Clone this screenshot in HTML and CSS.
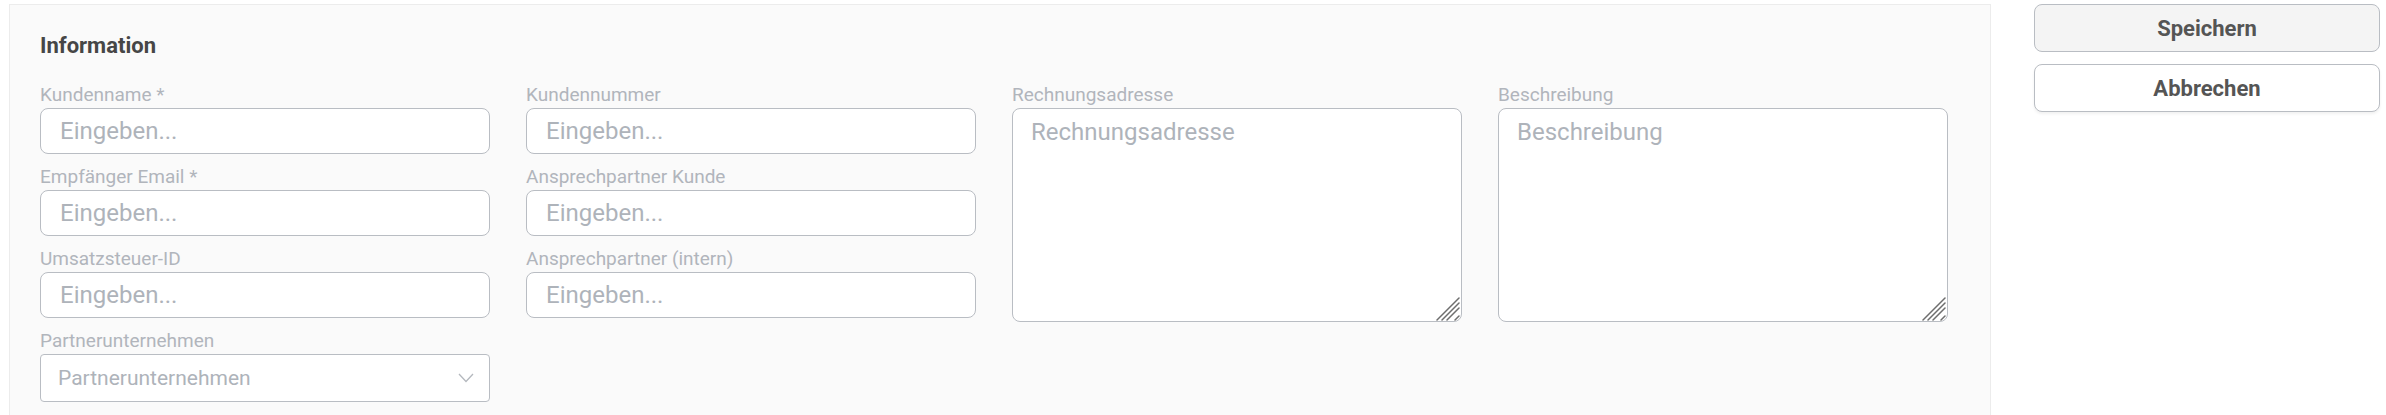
FILE: index.html
```html
<!DOCTYPE html>
<html>
<head>
  <title>Kunde bearbeiten</title>
  <link rel="stylesheet" href="styles.css">
</head>
<body>
  <div class="panel">
    <h2 class="panel-title">Information</h2>

    <div class="form-grid">
      <div class="form-col">
        <div class="field">
          <label>Kundenname *</label>
          <input type="text" placeholder="Eingeben...">
        </div>
        <div class="field">
          <label>Empfänger Email *</label>
          <input type="text" placeholder="Eingeben...">
        </div>
        <div class="field">
          <label>Umsatzsteuer-ID</label>
          <input type="text" placeholder="Eingeben...">
        </div>
        <div class="field">
          <label>Partnerunternehmen</label>
          <div class="select-wrap">
            <select>
              <option>Partnerunternehmen</option>
            </select>
            <svg class="chevron" width="16" height="10" viewBox="0 0 16 10">
              <polyline points="1,1 8,8.5 15,1" fill="none" stroke="#b4b8be" stroke-width="1.3"/>
            </svg>
          </div>
        </div>
      </div>

      <div class="form-col">
        <div class="field">
          <label>Kundennummer</label>
          <input type="text" placeholder="Eingeben...">
        </div>
        <div class="field">
          <label>Ansprechpartner Kunde</label>
          <input type="text" placeholder="Eingeben...">
        </div>
        <div class="field">
          <label>Ansprechpartner (intern)</label>
          <input type="text" placeholder="Eingeben...">
        </div>
      </div>

      <div class="form-col">
        <div class="field">
          <label>Rechnungsadresse</label>
          <div class="textarea-wrap">
            <textarea placeholder="Rechnungsadresse"></textarea>
            <svg class="grip" width="24" height="24" viewBox="0 0 24 24">
              <g stroke="#6e6e6e" stroke-width="1.5" stroke-linecap="round">
                <line x1="1" y1="23" x2="23" y2="1"/>
                <line x1="6" y1="23" x2="23" y2="6"/>
                <line x1="11" y1="23" x2="23" y2="11"/>
                <line x1="19" y1="23" x2="23" y2="19"/>
              </g>
            </svg>
          </div>
        </div>
      </div>

      <div class="form-col">
        <div class="field">
          <label>Beschreibung</label>
          <div class="textarea-wrap">
            <textarea placeholder="Beschreibung"></textarea>
            <svg class="grip" width="24" height="24" viewBox="0 0 24 24">
              <g stroke="#6e6e6e" stroke-width="1.5" stroke-linecap="round">
                <line x1="1" y1="23" x2="23" y2="1"/>
                <line x1="6" y1="23" x2="23" y2="6"/>
                <line x1="11" y1="23" x2="23" y2="11"/>
                <line x1="19" y1="23" x2="23" y2="19"/>
              </g>
            </svg>
          </div>
        </div>
      </div>
    </div>
  </div>

  <div class="actions">
    <button class="btn btn-save">Speichern</button>
    <button class="btn btn-cancel">Abbrechen</button>
  </div>
</body>
</html>
```

FILE: styles.css
```css
body {
  font-family: Roboto, 'Liberation Sans', Arial, sans-serif;
  margin: 0;
  padding: 4px 6px 0 9px;
  background: #fff;
  display: flex;
  gap: 43px;
  align-items: flex-start;
}

.panel {
  width: 1982px;
  box-sizing: border-box;
  background: #fafafa;
  border: 1px solid #ececec;
  padding: 28px 42px 30px 30px;
}

.panel-title {
  margin: 0 0 25px;
  font-size: 22px;
  line-height: 26px;
  font-weight: 700;
  color: #464646;
}

.form-grid {
  display: grid;
  grid-template-columns: repeat(4, 1fr);
  column-gap: 36px;
  align-items: start;
}

.form-col {
  display: flex;
  flex-direction: column;
  gap: 12px;
}

.field {
  display: flex;
  flex-direction: column;
}

.field label {
  font-size: 19px;
  line-height: 21px;
  color: #b1b5bc;
  margin-bottom: 3px;
}

input,
textarea,
select {
  font-family: Roboto, 'Liberation Sans', Arial, sans-serif;
  box-sizing: border-box;
  background: #fff;
  border: 1px solid #b9bdc3;
  outline: none;
}

input {
  height: 46px;
  border-radius: 8px;
  padding: 0 19px;
  font-size: 24px;
  color: #444;
}

.textarea-wrap {
  position: relative;
  display: flex;
}

textarea {
  width: 100%;
  height: 214px;
  border-radius: 8px;
  padding: 9px 18px;
  font-size: 24px;
  line-height: 28px;
  color: #444;
  resize: none;
}

/* drawn grip sits over the textarea corner */
.grip {
  position: absolute;
  right: 2px;
  bottom: 1px;
  pointer-events: none;
}

input::placeholder,
textarea::placeholder {
  color: #aeb3ba;
}

.select-wrap {
  position: relative;
}

select {
  width: 100%;
  height: 48px;
  border-radius: 4px;
  padding: 0 40px 0 17px;
  font-size: 21px;
  color: #aeb3ba;
  appearance: none;
  -webkit-appearance: none;
}

.chevron {
  position: absolute;
  right: 16px;
  top: 50%;
  transform: translateY(-50%);
  pointer-events: none;
}

.actions {
  width: 346px;
  display: flex;
  flex-direction: column;
  gap: 12px;
}

.btn {
  height: 48px;
  border: 1px solid #b9bdc3;
  border-radius: 8px;
  font-family: Roboto, 'Liberation Sans', Arial, sans-serif;
  font-size: 22px;
  font-weight: 700;
  color: #555;
  cursor: pointer;
}

.btn-save {
  background: #f4f4f4;
}

.btn-cancel {
  background: #fff;
  box-shadow: 0 2px 3px rgba(0, 0, 0, 0.06);
}
```
